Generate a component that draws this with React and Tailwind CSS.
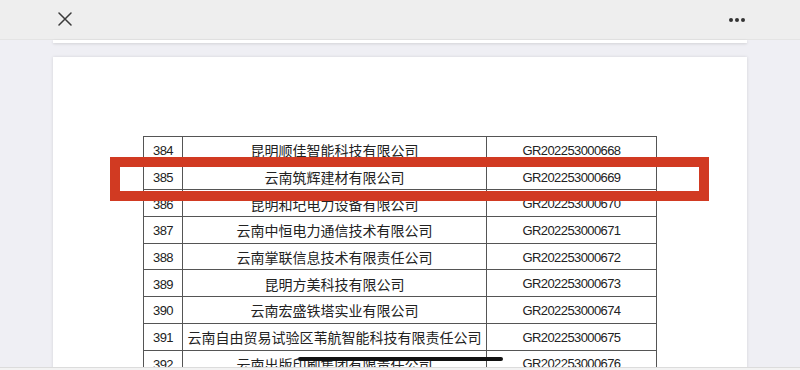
import React from 'react';

const rows = [
  { no: '384', name: '昆明顺佳智能科技有限公司', code: 'GR202253000668' },
  { no: '385', name: '云南筑辉建材有限公司', code: 'GR202253000669' },
  { no: '386', name: '昆明和圮电力设备有限公司', code: 'GR202253000670' },
  { no: '387', name: '云南中恒电力通信技术有限公司', code: 'GR202253000671' },
  { no: '388', name: '云南掌联信息技术有限责任公司', code: 'GR202253000672' },
  { no: '389', name: '昆明方美科技有限公司', code: 'GR202253000673' },
  { no: '390', name: '云南宏盛铁塔实业有限公司', code: 'GR202253000674' },
  { no: '391', name: '云南自由贸易试验区苇航智能科技有限责任公司', code: 'GR202253000675' },
  { no: '392', name: '云南出版印刷集团有限责任公司', code: 'GR202253000676' },
];

const latin = { fontFamily: '"Liberation Sans", Arial, sans-serif' };
const cjk = { fontFamily: '"Noto Sans CJK SC", "Noto Sans", sans-serif' };

const TopBar = () => (
  <div className="h-10 bg-[#eeeeee] flex items-center justify-between border-b border-[#e4e4e4]">
    <div className="w-[75px] h-full flex items-center justify-end pr-[3px]">
      <svg width="14" height="14" viewBox="0 0 14 14" className="mt-[-1px]">
        <path d="M1 1 L13 13 M13 1 L1 13" stroke="#3a3a3a" strokeWidth="1.5" strokeLinecap="round" />
      </svg>
    </div>
    <div className="w-[76px] h-full flex items-center justify-start pl-[4px]">
      <svg width="18" height="6" viewBox="0 0 18 6">
        <circle cx="3" cy="3" r="2" fill="#333" />
        <circle cx="9" cy="3" r="2" fill="#333" />
        <circle cx="15" cy="3" r="2" fill="#333" />
      </svg>
    </div>
  </div>
);

export default function App() {
  return (
    <div className="w-[800px] h-[370px] bg-[#efeff4] relative overflow-hidden">
      <TopBar />
      <div className="mx-[53px] h-[3px] bg-white shadow-[0_1px_3px_rgba(0,0,0,0.12)]" />
      <div className="mx-[53px] mt-[14px] bg-white shadow-[0_0_3px_rgba(0,0,0,0.12)] pt-[79px] pl-[90px] h-[400px]">
        <table className="border-collapse text-[#222]">
          <tbody>
            {rows.map((r) => (
              <tr key={r.no} className="h-[26.7px]">
                <td className="w-[39px] border border-[#555] text-center text-[13px] tracking-[-0.6px] pt-[2px] p-0 leading-none" style={latin}>
                  {r.no}
                </td>
                <td className="w-[304px] border border-[#555] text-center text-[14px] pt-[1px] p-0 leading-none" style={cjk}>
                  {r.name}
                </td>
                <td className="w-[170px] border border-[#555] text-center text-[13px] tracking-[-0.6px] pt-[1px] p-0 leading-none" style={latin}>
                  {r.code}
                </td>
              </tr>
            ))}
          </tbody>
        </table>
      </div>

      {/* highlight box */}
      <div className="absolute left-[110px] top-[157px] w-[599px] h-[44px] border-[10px] border-[#d13a22]" />

      {/* home indicator */}
      <div className="absolute left-[298px] top-[357px] w-[205px] h-[4px] rounded-full bg-[#111]" />

      {/* bottom toolbar edge */}
      <div className="absolute left-0 bottom-0 w-full h-[3px] bg-[#f3f3f3] border-t border-[#dcdcdc]" />
    </div>
  );
}
